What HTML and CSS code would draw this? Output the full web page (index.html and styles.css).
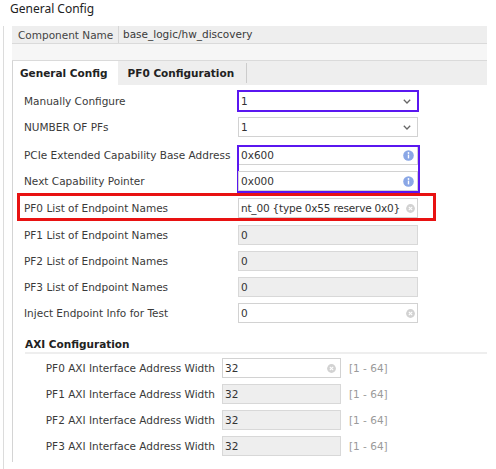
FILE: index.html
```html
<!DOCTYPE html>
<html>
<head>
<meta charset="utf-8">
<title>General Config</title>
<link rel="stylesheet" href="styles.css">
</head>
<body>
<div class="title">General Config</div>
<div class="frame">
  <div class="comp-row">
    <span class="comp-label">Component Name</span>
    <div class="comp-field">base_logic/hw_discovery</div>
  </div>
  <div class="strip"></div>
  <div class="tabs">
    <div class="tab active">General Config</div>
    <div class="tab second">PF0 Configuration</div>
    <div class="tab-sep"></div>
  </div>
  <div class="panel">
    <div class="row">
      <span class="label">Manually Configure</span>
      <div class="ctl hl-purple"><span class="val">1</span><svg class="chev" width="8" height="5" viewBox="0 0 8 5"><polyline points="0.8,0.8 4,4 7.2,0.8" fill="none" stroke="#666" stroke-width="1.3"/></svg></div>
    </div>
    <div class="row">
      <span class="label">NUMBER OF PFs</span>
      <div class="ctl"><span class="val">1</span><svg class="chev" width="8" height="5" viewBox="0 0 8 5"><polyline points="0.8,0.8 4,4 7.2,0.8" fill="none" stroke="#666" stroke-width="1.3"/></svg></div>
    </div>
    <div class="row m2">
      <span class="label">PCIe Extended Capability Base Address</span>
      <div class="ctl grp"><span class="val">0x600</span><svg class="info" width="11" height="11" viewBox="0 0 11 11"><circle cx="5.5" cy="5.5" r="5.3" fill="#8aa7e6"/><circle cx="5.5" cy="3" r="0.9" fill="#fff"/><rect x="4.8" y="4.6" width="1.4" height="3.8" fill="#fff"/></svg></div>
    </div>
    <div class="row">
      <span class="label">Next Capability Pointer</span>
      <div class="ctl"><span class="val">0x000</span><svg class="info" width="11" height="11" viewBox="0 0 11 11"><circle cx="5.5" cy="5.5" r="5.3" fill="#8aa7e6"/><circle cx="5.5" cy="3" r="0.9" fill="#fff"/><rect x="4.8" y="4.6" width="1.4" height="3.8" fill="#fff"/></svg></div>
    </div>
    <div class="row m1 hl-red">
      <span class="label">PF0 List of Endpoint Names</span>
      <div class="ctl"><span class="val clip">nt_00 {type 0x55 reserve 0x0}</span><svg class="clear" width="9" height="9" viewBox="0 0 9 9"><circle cx="4.5" cy="4.5" r="4.4" fill="#d2d2d2"/><path d="M2.8 2.8L6.2 6.2M6.2 2.8L2.8 6.2" stroke="#fff" stroke-width="1.1"/></svg></div>
    </div>
    <div class="row m1">
      <span class="label">PF1 List of Endpoint Names</span>
      <div class="ctl disabled"><span class="val">0</span></div>
    </div>
    <div class="row">
      <span class="label">PF2 List of Endpoint Names</span>
      <div class="ctl disabled"><span class="val">0</span></div>
    </div>
    <div class="row">
      <span class="label">PF3 List of Endpoint Names</span>
      <div class="ctl disabled"><span class="val">0</span></div>
    </div>
    <div class="row">
      <span class="label">Inject Endpoint Info for Test</span>
      <div class="ctl"><span class="val">0</span><svg class="clear" width="9" height="9" viewBox="0 0 9 9"><circle cx="4.5" cy="4.5" r="4.4" fill="#d2d2d2"/><path d="M2.8 2.8L6.2 6.2M6.2 2.8L2.8 6.2" stroke="#fff" stroke-width="1.1"/></svg></div>
    </div>

    <div class="section-title">AXI Configuration</div>
    <div class="axi-row first">
      <span class="axi-label">PF0 AXI Interface Address Width</span>
      <div class="ctl axi-ctl"><span class="val">32</span><svg class="clear axi-clear" width="9" height="9" viewBox="0 0 9 9"><circle cx="4.5" cy="4.5" r="4.4" fill="#d2d2d2"/><path d="M2.8 2.8L6.2 6.2M6.2 2.8L2.8 6.2" stroke="#fff" stroke-width="1.1"/></svg></div>
      <span class="range">[1 - 64]</span>
    </div>
    <div class="axi-row">
      <span class="axi-label">PF1 AXI Interface Address Width</span>
      <div class="ctl axi-ctl disabled"><span class="val">32</span></div>
      <span class="range">[1 - 64]</span>
    </div>
    <div class="axi-row">
      <span class="axi-label">PF2 AXI Interface Address Width</span>
      <div class="ctl axi-ctl disabled"><span class="val">32</span></div>
      <span class="range">[1 - 64]</span>
    </div>
    <div class="axi-row">
      <span class="axi-label">PF3 AXI Interface Address Width</span>
      <div class="ctl axi-ctl disabled"><span class="val">32</span></div>
      <span class="range">[1 - 64]</span>
    </div>
  </div>
</div>
</body>
</html>
```

FILE: styles.css
```css
html, body {
  margin: 0;
  padding: 0;
  background: #ffffff;
}

body {
  width: 496px;
  height: 469px;
  overflow: hidden;
  font-family: "DejaVu Sans", sans-serif;
  font-size: 10.5px;
  color: #3a3a3a;
}

.title {
  font-family: "Noto Sans", sans-serif;
  font-size: 12px;
  color: #222222;
  height: 22px;
  line-height: 18px;
  padding-left: 10px;
  box-sizing: border-box;
}

.frame {
  margin-left: 3px;
  border-left: 1px solid #dcdcdc;
  padding-left: 8px;
  width: 475px;
  height: 447px;
}

.comp-row {
  margin-top: 4px;
  height: 17px;
  background: #eeeeee;
  border-bottom: 1px solid #dadada;
  display: flex;
  align-items: center;
}

.comp-label {
  width: 106px;
  padding-left: 6px;
  box-sizing: border-box;
  color: #444444;
}

.comp-field {
  flex: 1;
  height: 17px;
  line-height: 17px;
  border-left: 1px solid #d6d6d6;
  padding-left: 4px;
  color: #3a3a3a;
}

.strip {
  height: 16px;
  background: #f6f6f6;
  border-bottom: 1px solid #dadada;
}

.tabs {
  height: 24px;
  background: #eeeeee;
  border-left: 1px solid #d4d4d4;
  display: flex;
  align-items: stretch;
}

.tab {
  line-height: 24px;
  font-weight: bold;
  color: #222222;
  padding: 0 10px 0 7px;
}

.tab.active {
  background: #ffffff;
}

.tab.second {
  padding: 0 12px 0 10px;
}

.tab-sep {
  width: 1px;
  background: #cccccc;
  margin: 2px 0;
}

.panel {
  border-left: 1px solid #d4d4d4;
  padding: 3px 0 0 11px;
  height: 377px;
  box-sizing: border-box;
}

.row {
  position: relative;
  display: flex;
  align-items: center;
  height: 26px;
}

.row.m1 { margin-top: 1px; }
.row.m2 { margin-top: 2px; }

.label {
  width: 214px;
  flex: none;
  white-space: nowrap;
}

.ctl {
  position: relative;
  width: 180px;
  height: 20px;
  box-sizing: border-box;
  border: 1px solid #d2d2d2;
  background: #ffffff;
  display: flex;
  align-items: center;
  padding: 0 2px 0 2px;
  flex: none;
}

.ctl.disabled {
  background: #eeeeee;
  border-color: #d8d8d8;
}

.val {
  flex: 1;
  white-space: nowrap;
  overflow: hidden;
  line-height: 17px;
  color: #333333;
}

.val.clip {
  letter-spacing: -0.2px;
  margin-right: 2px;
}

.chev {
  flex: none;
  margin-right: 4px;
}

.info {
  flex: none;
  margin-right: 1px;
}

.clear {
  flex: none;
}

.hl-purple {
  outline: 2px solid #5a17f0;
  outline-offset: -1px;
}

.grp::after {
  content: "";
  position: absolute;
  left: -2px;
  right: -3px;
  top: -1px;
  height: 48px;
  border: 2px solid #5a17f0;
  box-sizing: border-box;
  pointer-events: none;
}

.hl-red::after {
  content: "";
  position: absolute;
  left: -7px;
  top: -2px;
  width: 419px;
  height: 28px;
  border: 3px solid #e81212;
  box-sizing: border-box;
  pointer-events: none;
}

.section-title {
  margin: 10px 0 0 1px;
  line-height: 16px;
  font-weight: bold;
  color: #222222;
  border-bottom: 2px solid #eeeeee;
}

.axi-row {
  display: flex;
  align-items: center;
  height: 26px;
}

.axi-row.first {
  margin-top: 1px;
}

.axi-label {
  width: 191px;
  margin-right: 7px;
  text-align: right;
  white-space: nowrap;
  flex: none;
}

.axi-ctl {
  width: 119px;
}

.axi-clear {
  margin-right: 2px;
}

.range {
  margin-left: 8px;
  color: #9a9a9a;
}
```
